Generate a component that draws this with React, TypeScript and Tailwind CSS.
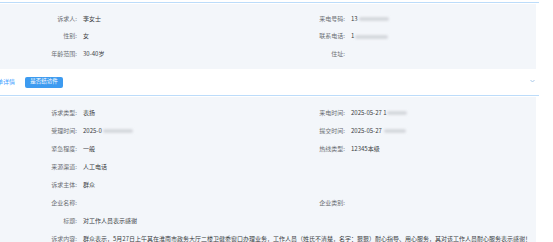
import React from "react";

type Item = { label: string; value?: React.ReactNode };

const Blur = ({ w }: { w: number }) => (
  <span
    className="inline-block h-[4px] align-middle bg-[#d6d9de] rounded-sm blur-[1px] ml-[1px]"
    style={{ width: w }}
  />
);

function Field({ label, value }: Item) {
  return (
    <div className="flex items-center h-full">
      <span className="w-[77px] shrink-0 text-right text-[#6b6e73]">{label}:</span>
      <span className="ml-[6px] text-[#3a3d42] whitespace-nowrap">{value}</span>
    </div>
  );
}

export default function App() {
  const top: (Item | null)[] = [
    { label: "诉求人", value: "李女士" },
    { label: "来电号码", value: <>13<Blur w={30} /></> },
    { label: "性别", value: "女" },
    { label: "联系电话", value: <>1<Blur w={33} /></> },
    { label: "年龄范围", value: "30-40岁" },
    { label: "住址" },
  ];

  const bottom: (Item | null)[] = [
    { label: "诉求类型", value: "表扬" },
    { label: "来电时间", value: <>2025-05-27 1<Blur w={20} /></> },
    { label: "受理时间", value: <>2025-0<Blur w={30} /></> },
    { label: "提交时间", value: <>2025-05-27 <Blur w={22} /></> },
    { label: "紧急程度", value: "一般" },
    { label: "热线类型", value: "12345本级" },
    { label: "来源渠道", value: "人工电话" },
    null,
    { label: "诉求主体", value: "群众" },
    null,
    { label: "企业名称" },
    { label: "企业类别" },
  ];

  return (
    <div
      className="w-[553px] h-[242px] overflow-hidden bg-white text-[6px] leading-none"
      style={{ fontFamily: '"Noto Sans CJK SC", "Liberation Sans", sans-serif' }}
    >
      <div className="w-[539px] pt-[2px]">
        <div className="border-t border-[#bcdcfa]" />
        <div className="mt-[1px] w-[536px] bg-[#f3f6fa] py-[6px] grid grid-cols-2 auto-rows-[17.5px]">
          {top.map((it, i) => (it ? <Field key={i} {...it} /> : <div key={i} />))}
        </div>

        <div className="h-[26px] flex items-center relative">
          <span className="-ml-[3px] text-[#409eff]">单详情</span>
          <button
            type="button"
            className="ml-[10px] mt-[1px] w-[38px] h-[11px] rounded-[2px] bg-[#3d9bf0] text-white text-[5.5px] flex items-center justify-center"
          >
            是否结访件
          </button>
          <svg
            className="absolute left-[530px] top-[10px]"
            width="5"
            height="4"
            viewBox="0 0 10 8"
            fill="none"
            stroke="#a9c8e8"
            strokeWidth="2"
          >
            <path d="M1 2l4 4 4-4" />
          </svg>
        </div>

        <div className="border-t border-[#bcdcfa]" />
        <div className="mt-[1px] w-[536px] bg-[#f3f6fa] pt-[7px] pb-[6px]">
          <div className="grid grid-cols-2 auto-rows-[18px]">
            {bottom.map((it, i) => (it ? <Field key={i} {...it} /> : <div key={i} />))}
          </div>
          <div className="h-[18px]">
            <Field label="标题" value="对工作人员表示感谢" />
          </div>
          <div className="h-[19px]">
            <Field
              label="诉求内容"
              value="群众表示，5月27日上午其在淮南市政务大厅二楼卫健委窗口办理业务，工作人员（姓氏不清楚，名字：狠狠）耐心指导、用心服务，其对该工作人员耐心服务表示感谢！"
            />
          </div>
        </div>
      </div>
    </div>
  );
}
